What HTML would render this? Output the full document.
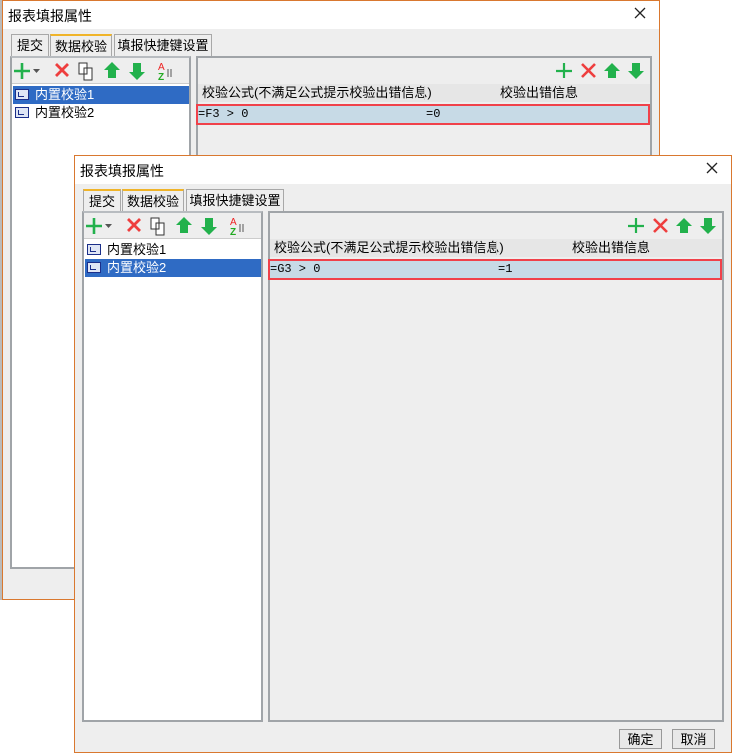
<!DOCTYPE html>
<html><head><meta charset="utf-8"><style>
body{margin:0;width:732px;height:753px;background:#fff;position:relative;overflow:hidden;font-family:"Liberation Sans","Noto Sans CJK SC",sans-serif;font-size:12px;color:#000}
.dlg{position:absolute;background:#eeeeee;border:1px solid #d9782f;box-sizing:border-box}
.tb{position:absolute;left:0;top:0;right:0;height:28px;background:#fff}
.tt{position:absolute;left:5px;top:5px;font-size:14px}
.x{position:absolute;right:12px;top:5px;width:14px;height:14px}
.tab{position:absolute;top:33px;height:22px;border:1px solid #a8a8a8;border-bottom:none;background:#eeeeee;font-size:13px;line-height:22px;text-align:center;box-sizing:border-box}
.tab.o{border-top:2px solid #f0b429}
.lp{position:absolute;left:7px;top:55px;width:181px;border:2px solid #a0a4a8;border-top:2px solid #b8bcc0;background:#eeeeee;box-sizing:border-box}
.list{position:absolute;left:0;right:0;top:25px;bottom:0;background:#fff;border-top:1px solid #ccc}
.it{position:absolute;left:1px;right:0;height:18px;line-height:18px;font-size:13px;padding-left:22px}
.it.s{background:#2f6bc4;color:#fff}
.ic{position:absolute;left:2px;top:3px;width:14px;height:11px;border:1px solid #1b2f8a;background:#dfe6f5;box-sizing:border-box}
.ic:after{content:"";position:absolute;left:2px;top:2px;width:5px;height:4px;border-left:1px solid #1b2f8a;border-bottom:1px solid #1b2f8a}
.rp{position:absolute;left:193px;top:55px;width:456px;border:2px solid #a0a4a8;background:#eeeeee;box-sizing:border-box}
.hd{position:absolute;left:0;right:0;top:26px;height:18px;background:#e6e6e6;font-size:13px;line-height:18px}
.row{position:absolute;left:-2px;right:0;top:46px;height:21px;background:#c7dae6;border:2px solid #f0414a;box-sizing:border-box;font-size:12px;line-height:17px;font-family:"Liberation Mono",monospace}
.btn{position:absolute;top:573px;width:43px;height:20px;border:1px solid #999;background:#e8e8e8;font-size:13px;line-height:20px;text-align:center;box-sizing:border-box}
svg{position:absolute}
</style></head><body>

<div style="position:absolute;left:0;top:0;width:2px;height:600px;background:#bbb"></div>

<!-- BACK DIALOG -->
<div class="dlg" style="left:2px;top:0;width:658px;height:600px">
 <div class="tb"><div class="tt">报表填报属性</div>
 <svg class="x" viewBox="0 0 14 14"><path d="M2 2L12 12M12 2L2 12" stroke="#222" stroke-width="1.3"/></svg></div>
 <div class="tab" style="left:8px;width:38px">提交</div>
 <div class="tab o" style="left:47px;width:62px">数据校验</div>
 <div class="tab" style="left:111px;width:98px">填报快捷键设置</div>
 <div class="lp" style="height:513px">
  <svg style="left:2px;top:2px" width="172" height="22" viewBox="0 0 172 22">
   <path d="M8 3v16M0 11h16" stroke="#22b14c" stroke-width="2.6"/><path d="M19 9h7l-3.5 4z" fill="#555"/>
   <path d="M42 4l12 12M54 4l-12 12" stroke="#ee3e3e" stroke-width="2.8"/>
   <path d="M65 3h8v11h-8z M70 8h8v12h-8z" fill="#fff" stroke="#333"/>
   <path d="M98 2l-8 8h4v8h8v-8h4z" fill="#22b14c"/>
   <path d="M123 20l-8-8h4V3h8v9h4z" fill="#22b14c"/>
   <text x="144" y="10" font-size="10" fill="#e22" font-family="Liberation Sans">A</text><text x="144" y="20" font-size="10" fill="#2a2" font-family="Liberation Sans" font-weight="bold">Z</text><path d="M154 9v8M157 9v8" stroke="#555"/>
  </svg>
  <div class="list">
   <div class="it s" style="top:2px"><span class="ic"></span>内置校验1</div>
   <div class="it" style="top:20px"><span class="ic"></span>内置校验2</div>
  </div>
 </div>
 <div class="rp" style="height:513px">
  <svg style="left:356px;top:2px" width="96" height="22" viewBox="0 0 96 22">
   <path d="M10 3v15M2 11h16" stroke="#22b14c" stroke-width="2.2"/>
   <path d="M28 4l13 13M41 4l-13 13" stroke="#ee3e3e" stroke-width="2.6"/>
   <path d="M58 3l-8 8h4v7h8v-7h4z" fill="#22b14c"/>
   <path d="M82 19l-8-8h4V3h8v8h4z" fill="#22b14c"/>
  </svg>
  <div class="hd"><span style="position:absolute;left:4px">校验公式(不满足公式提示校验出错信息)</span><span style="position:absolute;left:226px;top:2px;height:14px;border-left:1px solid #ccc"></span><span style="position:absolute;left:302px">校验出错信息</span></div>
  <div class="row"><span style="position:absolute;left:0">=F3 &gt; 0</span><span style="position:absolute;left:228px">=0</span></div>
 </div>
</div>

<!-- FRONT DIALOG -->
<div class="dlg" style="left:74px;top:155px;width:658px;height:598px">
 <div class="tb"><div class="tt">报表填报属性</div>
 <svg class="x" viewBox="0 0 14 14"><path d="M2 2L12 12M12 2L2 12" stroke="#222" stroke-width="1.3"/></svg></div>
 <div class="tab o" style="left:8px;width:38px">提交</div>
 <div class="tab o" style="left:47px;width:62px">数据校验</div>
 <div class="tab" style="left:111px;width:98px">填报快捷键设置</div>
 <div class="lp" style="height:511px">
  <svg style="left:2px;top:2px" width="172" height="22" viewBox="0 0 172 22">
   <path d="M8 3v16M0 11h16" stroke="#22b14c" stroke-width="2.6"/><path d="M19 9h7l-3.5 4z" fill="#555"/>
   <path d="M42 4l12 12M54 4l-12 12" stroke="#ee3e3e" stroke-width="2.8"/>
   <path d="M65 3h8v11h-8z M70 8h8v12h-8z" fill="#fff" stroke="#333"/>
   <path d="M98 2l-8 8h4v8h8v-8h4z" fill="#22b14c"/>
   <path d="M123 20l-8-8h4V3h8v9h4z" fill="#22b14c"/>
   <text x="144" y="10" font-size="10" fill="#e22" font-family="Liberation Sans">A</text><text x="144" y="20" font-size="10" fill="#2a2" font-family="Liberation Sans" font-weight="bold">Z</text><path d="M154 9v8M157 9v8" stroke="#555"/>
  </svg>
  <div class="list">
   <div class="it" style="top:2px"><span class="ic"></span>内置校验1</div>
   <div class="it s" style="top:20px"><span class="ic"></span>内置校验2</div>
  </div>
 </div>
 <div class="rp" style="height:511px">
  <svg style="left:356px;top:2px" width="96" height="22" viewBox="0 0 96 22">
   <path d="M10 3v15M2 11h16" stroke="#22b14c" stroke-width="2.2"/>
   <path d="M28 4l13 13M41 4l-13 13" stroke="#ee3e3e" stroke-width="2.6"/>
   <path d="M58 3l-8 8h4v7h8v-7h4z" fill="#22b14c"/>
   <path d="M82 19l-8-8h4V3h8v8h4z" fill="#22b14c"/>
  </svg>
  <div class="hd"><span style="position:absolute;left:4px">校验公式(不满足公式提示校验出错信息)</span><span style="position:absolute;left:226px;top:2px;height:14px;border-left:1px solid #ccc"></span><span style="position:absolute;left:302px">校验出错信息</span></div>
  <div class="row"><span style="position:absolute;left:0">=G3 &gt; 0</span><span style="position:absolute;left:228px">=1</span></div>
 </div>
 <div class="btn" style="left:544px">确定</div>
 <div class="btn" style="left:597px">取消</div>
</div>
</body></html>
